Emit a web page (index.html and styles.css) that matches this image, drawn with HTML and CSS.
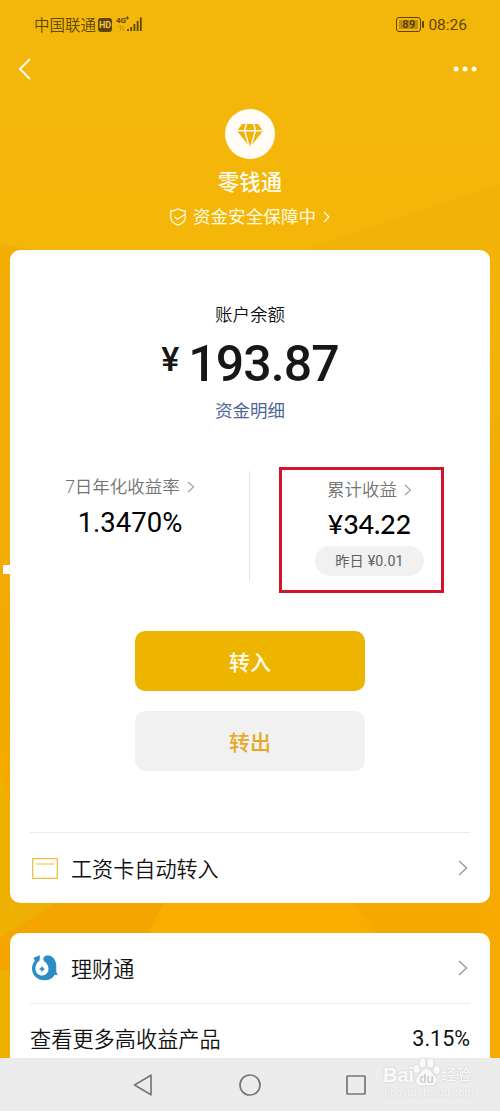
FILE: index.html
```html
<!DOCTYPE html>
<html lang="zh-CN">
<head>
<meta charset="utf-8">
<title>零钱通</title>
<link rel="stylesheet" href="styles.css">
</head>
<body>
<div class="screen">
  <svg class="backdrop" viewBox="0 0 500 1058" preserveAspectRatio="none" aria-hidden="true">
    <defs>
      <linearGradient id="base" x1="0" y1="0" x2="0" y2="1"><stop offset="0" stop-color="#f3b60a"/><stop offset=".24" stop-color="#f3b609"/><stop offset=".5" stop-color="#f3aa02"/><stop offset="1" stop-color="#f7a800"/></linearGradient>
    </defs>
    <rect width="500" height="1058" fill="url(#base)"/>
    <path d="M500 184L310 248V300H500Z" fill="#f2b207"/>
    <path d="M0 243L30 250V640L0 560Z" fill="#f2ae05"/>
    <path d="M480 478L500 460V1058H480Z" fill="#f6aa02"/>
    <path d="M0 770L10 800V903H60L0 938Z" fill="#eeb003"/>
    <path d="M60 900L0 938V990H120L165 900Z" fill="#f5a500"/>
    <path d="M165 900L120 990H420L350 900Z" fill="#f9ad00"/>
    <path d="M0 970L10 972V1058H0Z" fill="#eeb003"/>
  </svg>

  <header class="hero">
    <div class="status">
      <span class="carrier">中国联通</span>
      <span class="hd">HD</span>
      <svg class="signal" width="27" height="18" viewBox="0 0 27 18">
        <text x="0" y="7" class="net">4G</text>
        <path d="M11.300 .3v3.400M9.600 2h3.400" class="plus"/>
        <path d="M4.500 9.500v5M3 11l1.500-1.500M7 10v4.500L8.500 13" class="data"/>
        <path d="M12 13v2M15.200 11v4M18.400 8v7M21.600 5v10M24.800 1.500v13.500" class="bars"/>
      </svg>
      <span class="battery"><span class="level">89</span></span>
      <span class="clock">08:26</span>
    </div>
    <nav class="topbar">
      <svg width="14" height="24" viewBox="0 0 14 24"><path d="M12 2L2 12L12 22" class="back"/></svg>
      <svg width="24" height="6" viewBox="0 0 24 6"><circle cx="3" cy="3" r="2.500" fill="#fffdf0"/><circle cx="12" cy="3" r="2.500" fill="#fffdf0"/><circle cx="21" cy="3" r="2.500" fill="#fffdf0"/></svg>
    </nav>
    <div class="brand">
      <svg class="gem" width="50" height="50" viewBox="0 0 50 50">
        <circle cx="25" cy="25" r="25" fill="#fffdf5"/>
        <path d="M17 15H33L38 22L25.500 37.500H24.500L12 22Z" fill="#efb20a"/>
        <path d="M12 21.700H38M21.500 14.500L19.500 21.500L24.300 38M28.500 14.500L30.500 21.500L25.700 38" class="facets"/>
      </svg>
      <h1 class="name">零钱通</h1>
      <div class="safe">
        <svg width="16" height="18" viewBox="0 0 16 18"><path d="M8 .8C6 2.300 3.500 3 .8 3V9.500C.8 13 4 15.700 8 17.200C12 15.700 15.200 13 15.200 9.500V3C12.500 3 10 2.300 8 .8ZM4.500 8.800L7.300 11.300L15 6.500" class="shield"/></svg>
        <span>资金安全保障中</span>
        <svg width="7" height="12" viewBox="0 0 7 12"><path d="M1 1L6 6L1 11" class="shield"/></svg>
      </div>
    </div>
  </header>

  <main class="content">
    <section class="card account">
      <div class="balance-label">账户余额</div>
      <div class="balance"><span class="yen">¥</span><span class="sum">193.87</span></div>
      <a class="details">资金明细</a>
      <div class="stats">
        <div class="stat rate">
          <div class="stat-label">7日年化收益率<svg width="8" height="12" viewBox="0 0 8 12"><path d="M1 1L6.500 6L1 11" class="chev-s"/></svg></div>
          <div class="rate-value">1.3470%</div>
        </div>
        <div class="stat earned">
          <div class="stat-label">累计收益<svg width="8" height="12" viewBox="0 0 8 12"><path d="M1 1L6.500 6L1 11" class="chev-s"/></svg></div>
          <div class="earned-value">¥34.22</div>
          <div class="pill">昨日 ¥0.01</div>
        </div>
      </div>
      <div class="actions">
        <button class="btn primary">转入</button>
        <button class="btn plain">转出</button>
      </div>
      <div class="row salary">
        <svg width="26" height="21" viewBox="0 0 26 21"><path d="M.7 .7H25.300V20.300H.7ZM4 6H22" class="cardline"/></svg>
        <span class="row-text">工资卡自动转入</span>
        <svg width="10" height="16" viewBox="0 0 10 16"><path d="M1 1L8.500 8L1 15" class="chev"/></svg>
      </div>
      <i class="notch"></i>
    </section>

    <section class="card wealth">
      <div class="row">
        <svg width="28" height="26" viewBox="0 0 28 26">
          <path d="M2.500 2.800L9 .3L8.600 5.500C5.600 7.500 4.300 10.500 4.400 14C4.800 18 7.500 20.500 11 20.500C15 20.500 17.500 17.500 17.500 14C17.500 10.500 15.500 8 13.500 6.500C12 5.500 12 3.500 13 2C14.200 .6 16 .3 18 .6C22.500 1.500 25.300 6 25.300 11V17L26.800 20.300L23.800 19.800C21.500 23.500 18 25.300 13.500 25.300C6.500 25.300 1 20.300 1 13.500C1 10.500 2 8 3.800 6Z" fill="#2c8dc6"/>
          <path d="M11 11.500Q11.600 13.400 13.500 14Q11.600 14.600 11 16.500Q10.400 14.600 8.500 14Q10.400 13.400 11 11.500Z" fill="#2c8dc6" stroke="#2c8dc6" stroke-width=".6"/>
        </svg>
        <span class="row-text short">理财通</span>
        <svg width="10" height="16" viewBox="0 0 10 16"><path d="M1 1L8.500 8L1 15" class="chev"/></svg>
      </div>
      <div class="row more"><span class="more-text">查看更多高收益产品</span><span class="more-rate">3.15%</span></div>
    </section>
  </main>

  <footer class="navbar">
    <svg width="20" height="24" viewBox="0 0 20 24"><path d="M18 2.200V21.800L1.500 12Z" class="key"/></svg>
    <svg width="22" height="22" viewBox="0 0 22 22"><circle cx="11" cy="11" r="10" class="key"/></svg>
    <svg width="20" height="20" viewBox="0 0 20 20"><rect x="1" y="1" width="18" height="18" rx=".5" class="key"/></svg>
    <div class="watermark">
      <div class="wm-top"><span class="wm-bai">Bai</span>
        <svg width="27" height="28" viewBox="0 0 27 28"><g fill="#fafafa"><ellipse cx="3.500" cy="11" rx="3" ry="4"/><ellipse cx="9.500" cy="5" rx="3.200" ry="4.500"/><ellipse cx="17.500" cy="5" rx="3.200" ry="4.500"/><ellipse cx="23.500" cy="12" rx="3" ry="4"/><path d="M13.500 11C18 11 19 16 22 18.500C26 23 22 28 17 27H10C4 28 1 23 5 18.500C8 16 9 11 13.500 11Z"/></g><text x="13.500" y="25" class="wm-du">du</text></svg>
        <span class="wm-jy">经验</span></div>
      <div class="wm-url">jingyan.baidu.com</div>
    </div>
  </footer>
</div>
</body>
</html>
```

FILE: styles.css
```css
* { box-sizing: border-box; }
body { margin: 0; font-family: Roboto, "Noto Sans CJK SC", sans-serif; color: #111; }
h1 { margin: 0; }
svg { display: block; flex: none; fill: none; }
.screen { position: relative; width: 500px; height: 1111px; overflow: hidden; display: flex; flex-direction: column; }
.backdrop { position: absolute; inset: 0; width: 500px; height: 1058px; }

.hero { position: relative; height: 250px; flex: none; }
.status { height: 49px; padding: 0 33px 0 34px; display: flex; align-items: center; color: #614704; }
.carrier { font: 350 15.5px/20px "Noto Sans CJK SC", sans-serif; width: 62px; padding-bottom: 2px; white-space: nowrap; }
.hd { margin-left: 2px; width: 14px; height: 14px; border-radius: 3px; background: #5e4507; color: #f3c44a; font-size: 9px; font-weight: 700; line-height: 14px; text-align: center; }
.signal { margin-left: 4px; }
.net { font: 700 8px Roboto, sans-serif; fill: #5e4507; }
.plus { stroke: #5e4507; stroke-width: 1; }
.data { stroke: #c38f0a; stroke-width: 1; }
.bars { stroke: #5e4507; stroke-width: 1.8; }
.battery { position: relative; margin-left: auto; width: 25px; height: 15px; border: 1px solid #5e4507; border-radius: 3px; padding: 2px; }
.battery::after { content: ""; position: absolute; left: 25px; top: 3px; width: 2px; height: 7px; border-radius: 1px; background: #5e4507; }
.level { display: block; height: 9px; background: #c18e0b; color: #4d3804; font-size: 11px; font-weight: 500; line-height: 9px; text-align: center; letter-spacing: .3px; }
.clock { margin-left: 7px; font-size: 15.5px; line-height: 20px; }
.topbar { height: 40px; padding: 0 23px 0 18px; display: flex; justify-content: space-between; align-items: center; }
.back { stroke: #fffdf0; stroke-width: 2; }
.brand { display: flex; flex-direction: column; align-items: center; padding-top: 20px; }
.facets { stroke: #fffdf5; stroke-width: 1.4; }
.name { margin-top: 7px; color: #fffdf0; font: 500 21.3px/30px "Noto Sans CJK SC", sans-serif; }
.safe { margin-top: 9px; height: 24px; display: flex; align-items: center; color: #fffbe0; font-size: 17.6px; line-height: 24px; }
.safe span { margin: 0 7px 0 7px; }
.shield { stroke: #fffbe0; stroke-width: 1.3; }

.content { position: relative; padding: 0 10px; height: 808px; overflow: hidden; display: flex; flex-direction: column; gap: 30px; }
.card { position: relative; background: #fff; border-radius: 10px; flex: none; }
.account { height: 653px; padding-top: 51px; display: flex; flex-direction: column; align-items: center; }
.balance-label { font: 350 17.5px/26px "Noto Sans CJK SC", sans-serif; }
.balance { height: 65px; display: flex; align-items: flex-start; color: #171717; font-family: Roboto, sans-serif; }
.yen { font-size: 34px; font-weight: 500; line-height: 34px; margin: 15px 9px 0 0; }
.sum { font-size: 50px; font-weight: 500; line-height: 64px; margin-top: 5px; letter-spacing: -.9px; }
.details { margin-top: 5px; font: 400 17.5px/26px "Noto Sans CJK SC", sans-serif; color: #4f6596; }
.stats { position: relative; margin-top: 43px; width: 480px; height: 126px; display: flex; }
.stats::after { content: ""; position: absolute; left: 239px; top: 5px; width: 1px; height: 110px; background: #e4e4e4; }
.stat { display: flex; flex-direction: column; align-items: center; }
.rate { width: 240px; padding-top: 8px; }
.earned { width: 165px; height: 126px; margin-top: 1px; margin-left: 29px; border: 3px solid #d0142c; padding: 7px 0 0 16px; }
.stat-label { display: flex; align-items: center; gap: 7px; font-size: 17.5px; font-weight: 350; line-height: 26px; color: #737373; }
.chev-s { stroke: #a3a3a3; stroke-width: 1.2; }
.rate-value { font-size: 27.500px; line-height: 34px; margin-top: 6px; color: #000; }
.earned-value { font-family: Lato, sans-serif; font-size: 26.600px; line-height: 34px; margin-top: 4px; color: #000; font-weight: 500; }
.pill { width: 109px; height: 30px; margin-top: 5px; border-radius: 15px; background: #f1f1f1; color: #606060; font-size: 14.2px; line-height: 30px; text-align: center; letter-spacing: .2px; }
.actions { margin-top: 39px; display: flex; flex-direction: column; gap: 20px; }
.btn { width: 230px; height: 60px; padding: 0; border: 0; border-radius: 10px; font: 500 21px/61px "Noto Sans CJK SC", sans-serif; }
.primary { background: #edb500; color: #fffdf0; }
.plain { background: #f1f1f1; color: #e5a924; }
.row { display: flex; align-items: center; width: 440px; height: 70px; margin: 0 20px; padding: 0 2px 0 1px; }
.salary { margin-top: 61px; height: 72px; padding-left: 2px; border-top: 1px solid #ebebeb; }
.cardline { stroke: #edbd3a; stroke-width: 1.2; }
.row-text { flex: 1; margin-left: 13px; font: 350 21.1px/30px "Noto Sans CJK SC", sans-serif; }
.row-text.short { margin-left: 12px; padding-bottom: 1px; }
.chev { stroke: #a0a0a0; stroke-width: 1.6; }
.notch { position: absolute; left: -7px; top: 315px; width: 8px; height: 9px; background: #fff; }
.wealth { height: 180px; }
.more { border-top: 1px solid #ebebeb; justify-content: space-between; padding: 0; }
.more-text { font: 350 21.2px/30px "Noto Sans CJK SC", sans-serif; padding-bottom: 1px; }
.more-rate { font-size: 21.5px; }

.navbar { position: relative; height: 53px; background: #ececec; display: flex; align-items: center; padding-left: 133px; }
.key { stroke: #777; stroke-width: 1.7; stroke-linejoin: round; }
.navbar > svg + svg { margin-left: 86px; }
.navbar > svg + svg + svg { margin-left: 85px; }
.watermark { position: absolute; left: 383px; top: -1px; width: 94px; color: #fafafa; filter: drop-shadow(0 0 1px #ccc); }
.wm-top { display: flex; align-items: flex-end; height: 29px; }
.wm-bai { font: 700 20px/22px "Liberation Sans", sans-serif; width: 30px; }
.wm-du { font: 700 12px "Liberation Sans", sans-serif; fill: #ccc; text-anchor: middle; }
.wm-jy { font-size: 15px; line-height: 21px; white-space: nowrap; margin-left: 1px; }
.wm-url { font: 11px/12px "Liberation Sans", sans-serif; margin-left: 2px; white-space: nowrap; opacity: .7; }
```
